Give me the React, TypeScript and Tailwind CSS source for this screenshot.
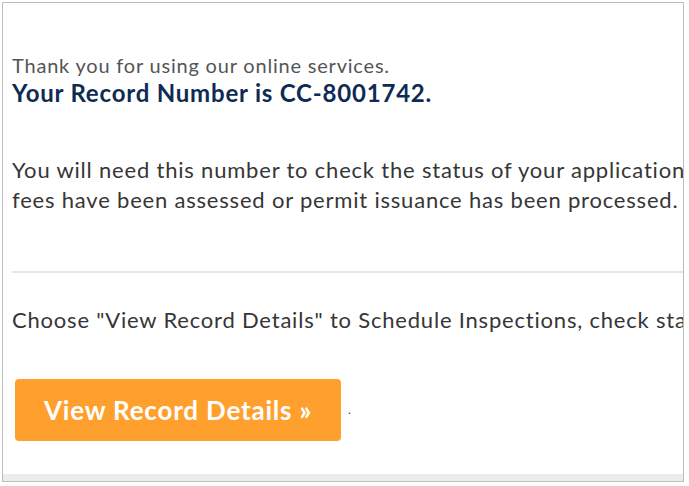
export default function App() {
  return (
    <div className="w-[689px] h-[486px] bg-white p-[2px]" style={{ fontFamily: 'Lato, "Open Sans", sans-serif' }}>
      <div className="w-[682px] h-[480px] border border-[#bdbdbd] overflow-hidden flex flex-col">
        <div className="flex-1 pl-[9px] pt-[48px]">
          <div className="w-[1000px]">
            <p className="text-[20px] leading-[28px] text-[#555] tracking-[0.8px]">
              Thank you for using our online services.
            </p>
            <p className="text-[24px] leading-[28px] font-bold text-[#0d2b55] tracking-[0.8px]">
              Your Record Number is CC-8001742.
            </p>
            <p className="mt-[48px] text-[22px] leading-[30px] text-[#363636] tracking-[0.8px]">
              You will need this number to check the status of your application or to make a payment once
              <br />
              fees have been assessed or permit issuance has been processed.
            </p>
          </div>
          <div className="mt-[56px] h-[2px] bg-[#e6e6e6]" />
          <p className="mt-[32px] w-[1000px] text-[22px] leading-[30px] text-[#363636] tracking-[0.8px]">
            Choose "View Record Details" to Schedule Inspections, check status of your record.
          </p>
          <div className="mt-[44px] flex items-end gap-[7px] pl-[3px]">
            <button className="w-[326px] h-[62px] rounded-[4px] bg-[#ffa02e] text-white font-bold text-[26px] tracking-[0.8px] text-left pl-[29px]">
              View Record Details »
            </button>
            <span className="text-[#3a3a3a] text-[12px] mb-[22px]">.</span>
          </div>
        </div>
        <div className="h-[7px] bg-[#ececec]" />
      </div>
    </div>
  );
}
